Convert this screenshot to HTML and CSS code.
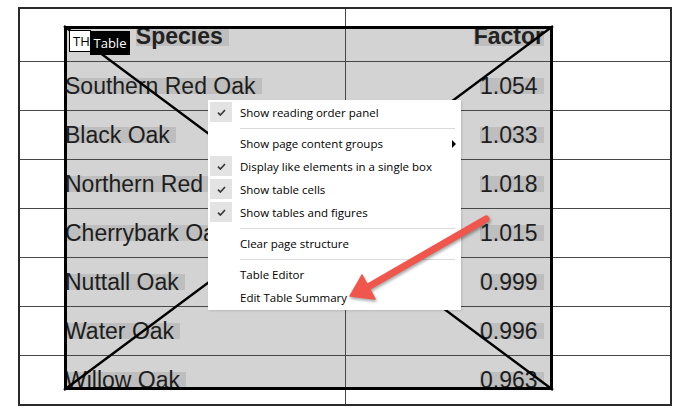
FILE: index.html
```html
<!DOCTYPE html>
<html>
<head>
<meta charset="utf-8">
<link rel="stylesheet" href="styles.css">
</head>
<body>
<div class="page">
  <div class="sheet">
    <div class="region"></div>
    <div class="cell l head"><span class="hl hh">Species </span></div>
    <div class="cell r head"><span class="hl hh">Factor</span></div>
    <div class="cell l"><span class="hl">Southern Red Oak </span></div>
    <div class="cell r"><span class="hl">1.054 </span></div>
    <div class="cell l"><span class="hl">Black Oak </span></div>
    <div class="cell r"><span class="hl">1.033 </span></div>
    <div class="cell l"><span class="hl">Northern Red Oak </span></div>
    <div class="cell r"><span class="hl">1.018 </span></div>
    <div class="cell l"><span class="hl">Cherrybark Oak </span></div>
    <div class="cell r"><span class="hl">1.015 </span></div>
    <div class="cell l"><span class="hl">Nuttall Oak </span></div>
    <div class="cell r"><span class="hl">0.999 </span></div>
    <div class="cell l"><span class="hl">Water Oak </span></div>
    <div class="cell r"><span class="hl">0.996 </span></div>
    <div class="cell l last"><span class="hl">Willow Oak </span></div>
    <div class="cell r last"><span class="hl">0.963 </span></div>
    <div class="frame">
      <svg class="diag" viewBox="0 0 489 364" preserveAspectRatio="none">
        <line x1="0" y1="0" x2="489" y2="364" stroke="#000" stroke-width="2.4"/>
        <line x1="489" y1="0" x2="0" y2="364" stroke="#000" stroke-width="2.4"/>
      </svg>
    </div>
    <div class="tag-th">TH</div>
    <div class="tag-table">Table</div>
  </div>

  <div class="menu">
    <div class="item checked"><span class="check"><svg width="9" height="7" viewBox="0 0 9 7"><path d="M1 3.6 L3.4 6 L8 1" stroke="#3a3a3a" stroke-width="1.7" fill="none"/></svg></span>Show reading order panel</div>
    <div class="sep"></div>
    <div class="item sub">Show page content groups</div>
    <div class="item checked"><span class="check"><svg width="9" height="7" viewBox="0 0 9 7"><path d="M1 3.6 L3.4 6 L8 1" stroke="#3a3a3a" stroke-width="1.7" fill="none"/></svg></span>Display like elements in a single box</div>
    <div class="item checked"><span class="check"><svg width="9" height="7" viewBox="0 0 9 7"><path d="M1 3.6 L3.4 6 L8 1" stroke="#3a3a3a" stroke-width="1.7" fill="none"/></svg></span>Show table cells</div>
    <div class="item checked"><span class="check"><svg width="9" height="7" viewBox="0 0 9 7"><path d="M1 3.6 L3.4 6 L8 1" stroke="#3a3a3a" stroke-width="1.7" fill="none"/></svg></span>Show tables and figures</div>
    <div class="sep"></div>
    <div class="item">Clear page structure</div>
    <div class="sep"></div>
    <div class="item">Table Editor</div>
    <div class="item">Edit Table Summary</div>
  </div>

  <svg class="arrow" width="685" height="417" viewBox="0 0 685 417">
    <g class="arrow-g">
      <line x1="486" y1="219" x2="368" y2="287" stroke="#f0564b" stroke-width="7" stroke-linecap="round"/>
      <polygon points="350,296 362,275 368,286 375,299" fill="#f0564b" stroke="#f0564b" stroke-width="1.5" stroke-linejoin="round"/>
    </g>
  </svg>
</div>
</body>
</html>
```

FILE: styles.css
```css
html, body {
  margin: 0;
  padding: 0;
  background: #ffffff;
}

.page {
  position: relative;
  width: 685px;
  height: 417px;
  overflow: hidden;
  padding-top: 7px;
  box-sizing: border-box;
}

.sheet {
  position: relative;
  margin-left: 18px;
  width: 654px;
  height: 399px;
  box-sizing: border-box;
  border: 2px solid #2a2a2a;
  display: grid;
  grid-template-columns: 326px 324px;
  grid-template-rows: 53px repeat(6, 49px) 48px;
}

.region {
  position: absolute;
  left: 44px;
  top: 17px;
  width: 489px;
  height: 364px;
  background: #d3d3d3;
  z-index: 0;
}

.cell {
  position: relative;
  z-index: 1;
  box-sizing: border-box;
  border-bottom: 1px solid #474747;
  display: flex;
  align-items: flex-start;
  padding-top: 16px;
}

.cell.last {
  border-bottom: none;
}

.cell.l {
  border-right: 1px solid #474747;
  padding-left: 45px;
  justify-content: flex-start;
}

.cell.r {
  padding-right: 126px;
  justify-content: flex-end;
}

.cell.head {
  padding-top: 18px;
}

.cell.l.head {
  padding-left: 0;
  justify-content: center;
}

.hl {
  display: inline-block;
  height: 16px;
  line-height: 16px;
  background: #bebebe;
  font-family: "Liberation Sans", Arial, sans-serif;
  font-size: 23px;
  color: #1d1d1d;
  white-space: pre;
}

.hl.hh {
  height: 19px;
  line-height: 19px;
  font-weight: 700;
  color: #222;
}

.frame {
  position: absolute;
  left: 44px;
  top: 17px;
  width: 489px;
  height: 364px;
  box-sizing: border-box;
  border: 3px solid #000;
  z-index: 2;
}

.diag {
  position: absolute;
  left: -3px;
  top: -3px;
  width: 489px;
  height: 364px;
  overflow: visible;
}

.tag-th {
  position: absolute;
  left: 49px;
  top: 21px;
  width: 22px;
  height: 22px;
  box-sizing: border-box;
  border: 1px solid #000;
  background: #fff;
  font-family: "Open Sans", sans-serif;
  font-size: 13px;
  line-height: 20px;
  padding-left: 3px;
  color: #000;
  z-index: 3;
  overflow: hidden;
}

.tag-table {
  position: absolute;
  left: 70px;
  top: 22px;
  width: 40px;
  height: 24px;
  background: #000;
  color: #fff;
  font-family: "Open Sans", sans-serif;
  font-size: 13px;
  line-height: 24px;
  text-align: center;
  z-index: 3;
}

.menu {
  position: absolute;
  left: 208px;
  top: 100px;
  width: 253px;
  height: 210px;
  box-sizing: border-box;
  padding-top: 1px;
  background: #fff;
  box-shadow: 1px 1px 2px rgba(0, 0, 0, 0.12);
  z-index: 5;
  font-family: "Open Sans", "Noto Sans", sans-serif;
  font-size: 11.5px;
  color: #000;
}

.item {
  position: relative;
  height: 23px;
  display: flex;
  align-items: center;
  padding-left: 32px;
  white-space: nowrap;
}

.check {
  position: absolute;
  left: 2px;
  top: 1px;
  width: 22px;
  height: 20px;
  background: #e3e3e3;
  display: flex;
  align-items: center;
  justify-content: center;
}

.item.sub::after {
  content: "";
  position: absolute;
  right: 5px;
  top: 8px;
  border-left: 4px solid #000;
  border-top: 4px solid transparent;
  border-bottom: 4px solid transparent;
}

.sep {
  height: 8px;
  margin-left: 32px;
  margin-right: 6px;
  display: flex;
  align-items: center;
}

.sep::before {
  content: "";
  flex: 1;
  border-top: 1px solid #d9d9d9;
}

.arrow {
  position: absolute;
  left: 0;
  top: 0;
  z-index: 6;
  pointer-events: none;
}

.arrow-g {
  filter: drop-shadow(1px 2px 1.5px rgba(0, 0, 0, 0.35));
}
```
